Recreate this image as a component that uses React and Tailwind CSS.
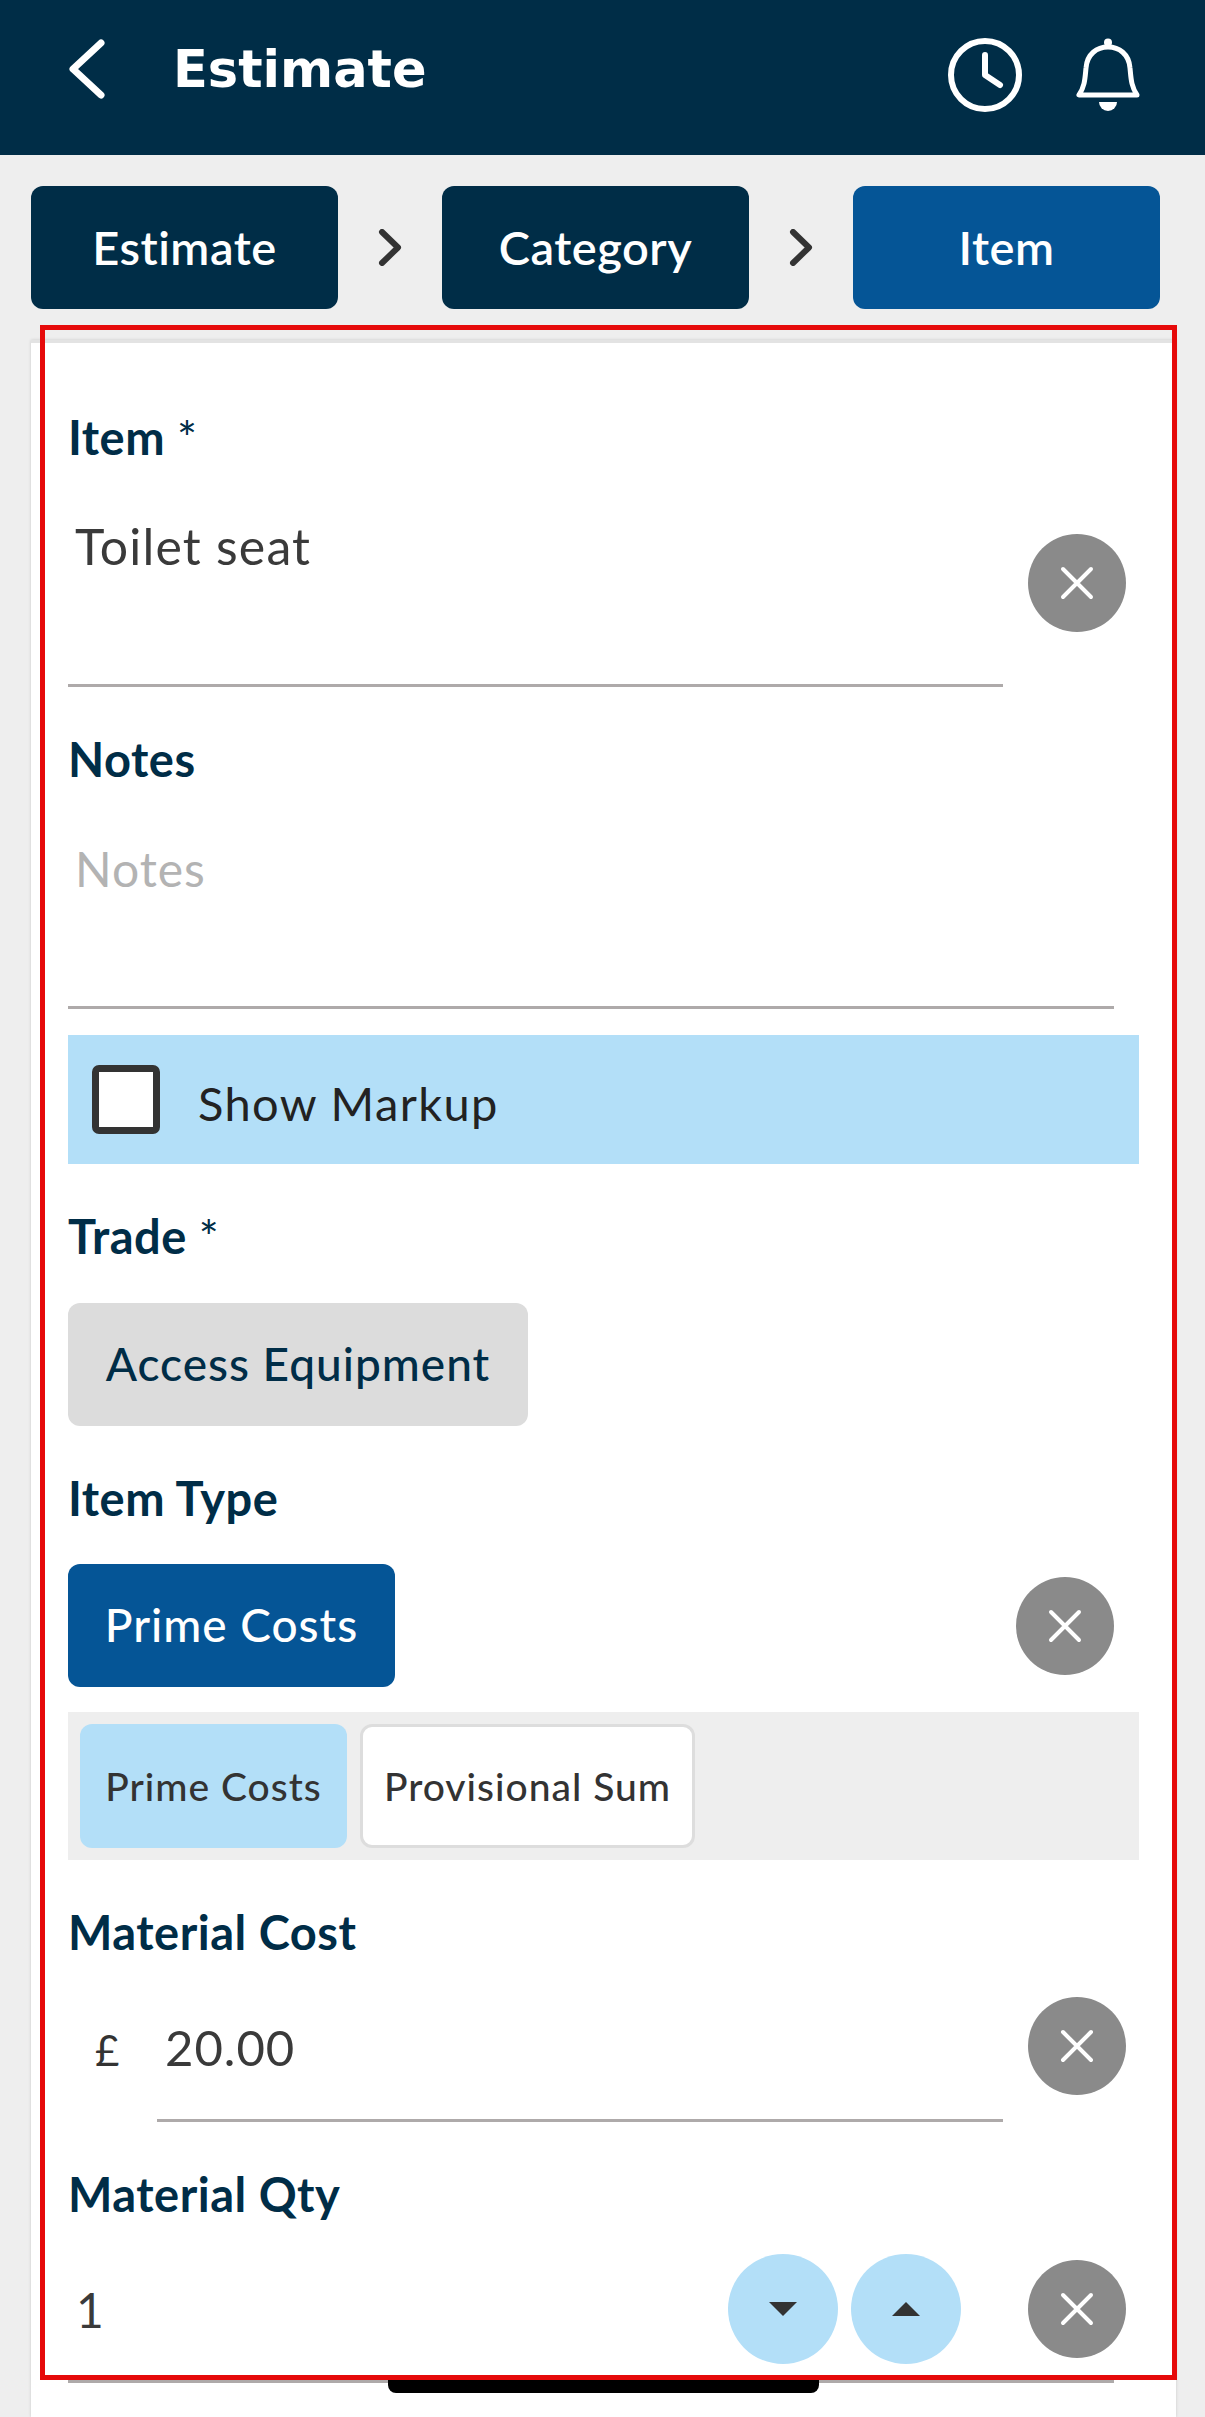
import React from 'react';

const lato = "font-['Lato','Liberation_Sans',sans-serif]";

function Clear({ className = '' }) {
  return (
    <div className={`w-[98px] h-[98px] rounded-full bg-[#8a8a8a] flex items-center justify-center shrink-0 ${className}`}>
      <svg width="34" height="34" viewBox="0 0 34 34" fill="none" stroke="#fff" strokeWidth="4" strokeLinecap="round">
        <path d="M3 3 L31 31 M31 3 L3 31" />
      </svg>
    </div>
  );
}

function Chevron() {
  return (
    <div className="w-[104px] flex items-center justify-center">
      <svg width="24" height="37" viewBox="0 0 24 37" fill="none" stroke="#333333" strokeWidth="6" strokeLinecap="round" strokeLinejoin="round">
        <path d="M4 3 L20 18.5 L4 34" />
      </svg>
    </div>
  );
}

function Step({ label, active }) {
  return (
    <div className={`w-[307px] h-[123px] rounded-[12px] flex items-center justify-center text-white text-[47px] font-semibold tracking-[0.5px] ${active ? 'bg-[#055596]' : 'bg-[#002d47]'}`}>
      {label}
    </div>
  );
}

function Label({ children, className = '' }) {
  return <div className={`text-[47px] leading-[52px] font-bold text-[#002d47] tracking-[0.5px] ${className}`}>{children}</div>;
}

function Stepper({ up }) {
  return (
    <div className="w-[110px] h-[110px] rounded-full bg-[#b3dff8] flex items-center justify-center">
      <svg width="28" height="14" viewBox="0 0 28 14" fill="#333333">
        {up ? <path d="M14 0 L28 14 H0 Z" /> : <path d="M0 0 H28 L14 14 Z" />}
      </svg>
    </div>
  );
}

export default function App() {
  return (
    <div className={`relative w-[1205px] h-[2417px] overflow-hidden bg-[#eeeeee] ${lato}`}>
      {/* header */}
      <div className="h-[155px] bg-[#002d47] flex items-start pl-[69px] pr-[65px] pt-[38px]">
        <svg width="36" height="60" viewBox="0 0 36 60" fill="none" stroke="#fff" strokeWidth="7" strokeLinecap="round" strokeLinejoin="round" className="mt-[1px]">
          <path d="M32 4 L4 30 L32 56" />
        </svg>
        <div className="ml-[68px] text-white text-[51px] leading-[64px] font-bold font-['DejaVu_Sans',sans-serif]">Estimate</div>
        <div className="ml-auto flex items-start gap-[54px]">
          <svg width="74" height="74" viewBox="0 0 74 74" fill="none" stroke="#fff" strokeWidth="6" strokeLinecap="round" strokeLinejoin="round">
            <circle cx="37" cy="37" r="34" />
            <path d="M37 17 V37 L52 47" />
          </svg>
          <svg width="64" height="74" viewBox="0 0 64 74" fill="none" stroke="#fff" strokeWidth="5" strokeLinejoin="round">
            <circle cx="32" cy="4.5" r="4" fill="#fff" stroke="none" />
            <path d="M3 57 H61 C55 48 55 40 54 30 C53 16 43 9 32 9 C21 9 11 16 10 30 C9 40 9 48 3 57 Z" />
            <path d="M23 64 H41 A9 9 0 0 1 23 64 Z" fill="#fff" stroke="none" />
          </svg>
        </div>
      </div>

      {/* breadcrumb */}
      <div className="flex pl-[31px] pt-[31px]">
        <Step label="Estimate" />
        <Chevron />
        <Step label="Category" />
        <Chevron />
        <Step label="Item" active />
      </div>

      {/* form */}
      <div className="ml-[31px] mt-[31px] w-[1145px] h-[2077px] bg-white border-t-[3px] border-[#e3e3e3] shadow-[0_0_3px_rgba(0,0,0,0.15)] pl-[37px] pr-[37px] pt-[68px]">
        <Label>Item <span className="font-normal">*</span></Label>

        <div className="flex mt-[51px]">
          <div className="w-[935px] h-[173px] border-b-[3px] border-[#aeaaaa] pl-[7px] pt-[2px] text-[50px] leading-[60px] text-[#3a3a3a] tracking-[1.2px]">Toilet seat</div>
          <Clear className="ml-[25px] mt-[20px]" />
        </div>

        <Label className="mt-[46px]">Notes</Label>
        <div className="w-[1046px] h-[172px] mt-[52px] border-b-[3px] border-[#aeaaaa] pl-[7px] pt-[2px] text-[48px] leading-[60px] text-[#b3b3b3] tracking-[1px]">Notes</div>

        <div className="w-[1071px] h-[129px] mt-[26px] bg-[#b3dff8] flex items-center pl-[24px]">
          <div className="w-[68px] h-[69px] rounded-[7px] border-[7px] border-[#333333] bg-white" />
          <div className="ml-[38px] pt-[7px] text-[47px] text-[#222222] tracking-[1.4px]">Show Markup</div>
        </div>

        <Label className="mt-[46px]">Trade <span className="font-normal">*</span></Label>
        <div className="w-[460px] h-[123px] mt-[41px] pb-[3px] rounded-[12px] bg-[#dcdcdc] flex items-center justify-center text-[46px] font-medium text-[#002d47] tracking-[1px]">Access Equipment</div>

        <Label className="mt-[46px]">Item Type</Label>
        <div className="flex mt-[40px] items-start">
          <div className="w-[327px] h-[123px] pb-[2px] rounded-[12px] bg-[#055596] flex items-center justify-center text-[46px] font-medium text-white tracking-[1px]">Prime Costs</div>
          <Clear className="ml-auto mr-[25px] mt-[13px]" />
        </div>

        <div className="w-[1071px] h-[148px] mt-[25px] bg-[#eeeeee] flex items-center pl-[12px] gap-[13px]">
          <div className="w-[267px] h-[124px] rounded-[12px] bg-[#b3dff8] flex items-center justify-center text-[39px] font-medium text-[#333333] tracking-[1px]">Prime Costs</div>
          <div className="w-[335px] h-[124px] rounded-[12px] bg-white border-[3px] border-[#dddddd] flex items-center justify-center text-[39px] font-medium text-[#333333] tracking-[1px]">Provisional Sum</div>
        </div>

        <Label className="mt-[46px]">Material Cost</Label>
        <div className="flex mt-[39px] items-start">
          <div className="w-[89px] pl-[27px] pt-[23px] text-[42px] leading-[60px] text-[#333333]">£</div>
          <div className="w-[846px] h-[125px] border-b-[3px] border-[#aeaaaa] pl-[8px] pt-[20px] text-[49px] leading-[60px] text-[#3a3a3a] tracking-[1px]">20.00</div>
          <Clear className="ml-[25px]" />
        </div>

        <Label className="mt-[46px]">Material Qty</Label>
        <div className="relative w-[1046px] h-[129px] mt-[34px] border-b-[3px] border-[#aeaaaa] flex items-start">
          <div className="pl-[8px] pt-[26px] text-[48px] leading-[60px] text-[#3a3a3a]">1</div>
          <div className="ml-auto flex gap-[13px] mr-[153px]">
            <Stepper />
            <Stepper up />
          </div>
          <Clear className="absolute left-[960px] top-[6px]" />
        </div>
      </div>

      {/* annotation frame and home indicator sit over the page */}
      <div className="absolute left-[388px] top-[2380px] w-[431px] h-[13px] rounded-b-[8px] bg-black" />
      <div className="absolute left-[40px] top-[325px] w-[1137px] h-[2055px] border-[5px] border-[#e60a0a] pointer-events-none" />
    </div>
  );
}
